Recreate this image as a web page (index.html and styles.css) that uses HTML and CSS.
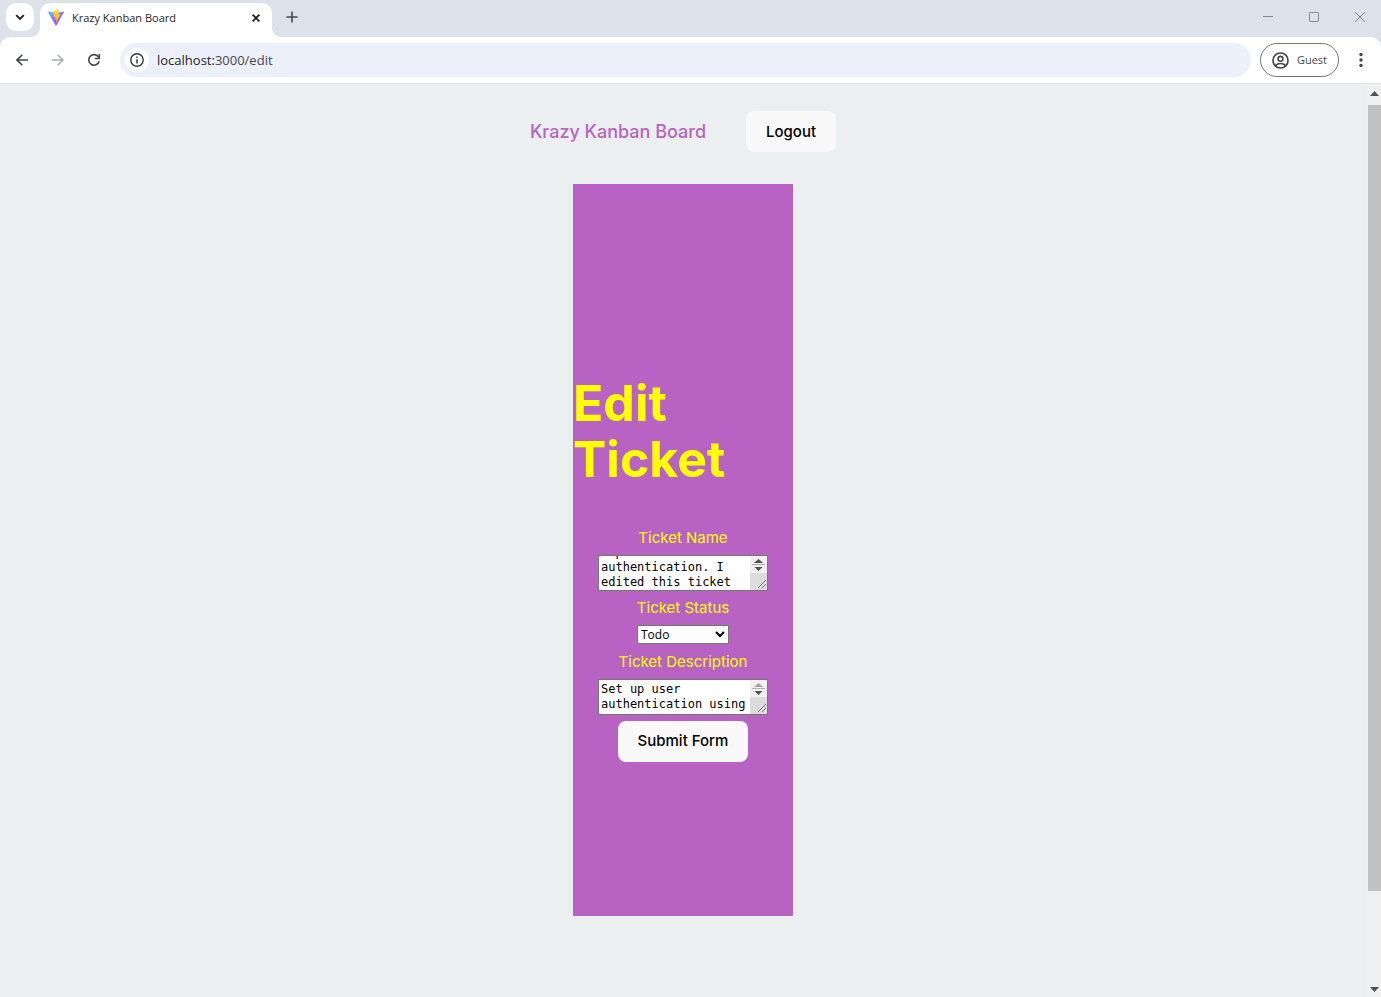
FILE: index.html
```html
<!DOCTYPE html>
<html lang="en">
<head>
<meta charset="utf-8">
<title>Krazy Kanban Board</title>
<link rel="stylesheet" href="styles.css">
</head>
<body>
<div class="browser">
  <header class="tabstrip">
    <button class="tab-search" aria-label="Search tabs"><svg width="10" height="7" viewBox="0 0 10 7"><path d="M1.200 1.200 5 5l3.800-3.800" fill="none" stroke="#1f1f1f" stroke-width="1.900"/></svg></button>
    <div class="tab">
      <svg class="favicon" width="16" height="16" viewBox="0 0 16 16">
        <defs>
          <linearGradient id="v" x1="0" y1="0" x2=".7" y2="1"><stop offset="0" stop-color="#41d1ff"/><stop offset=".35" stop-color="#7a8cff"/><stop offset="1" stop-color="#bd34fe"/></linearGradient>
          <linearGradient id="b" x1="0" y1="0" x2="0" y2="1"><stop offset="0" stop-color="#ffdd35"/><stop offset="1" stop-color="#ffa800"/></linearGradient>
        </defs>
        <path d="M15.900 2.300 8.400 15.600a.5.5 0 0 1-.8 0L.1 2.300a.5.5 0 0 1 .5-.7L8 2.900l7.400-1.300a.5.5 0 0 1 .5.7z" fill="url(#v)"/>
        <path d="M11.400.1 6 1.100a.2.2 0 0 0-.2.200l-.4 5.600c0 .2.100.3.300.2l1.500-.3c.2 0 .3.1.2.300L7 9.200c0 .2.100.3.300.2l.9-.3c.2 0 .3.100.3.300l-.8 3.400c0 .2.200.3.300.1l4.300-8.500c.1-.2 0-.3-.2-.3l-1.600.3c-.2 0-.3-.1-.2-.3l1.300-3.700c0-.2-.1-.3-.2-.3z" fill="url(#b)"/>
      </svg>
      <span class="tab-title">Krazy Kanban Board</span>
      <button class="bare" aria-label="Close tab"><svg width="8" height="8" viewBox="0 0 8 8"><path d="M.6.6l6.800 6.800M7.400.6.6 7.400" stroke="#1f1f1f" stroke-width="1.700"/></svg></button>
    </div>
    <button class="bare new-tab" aria-label="New tab"><svg width="12" height="12" viewBox="0 0 12 12"><path d="M6 .5v11M.5 6h11" stroke="#444746" stroke-width="1.600"/></svg></button>
    <div class="window-controls">
      <button class="bare" aria-label="Minimize"><svg width="10" height="10" viewBox="0 0 10 10"><path d="M0 4.500h10" stroke="#85888d"/></svg></button>
      <button class="bare" aria-label="Maximize"><svg width="10" height="10" viewBox="0 0 10 10"><rect x=".5" y=".5" width="9" height="9" rx=".6" fill="none" stroke="#85888d"/></svg></button>
      <button class="bare" aria-label="Close"><svg width="10" height="10" viewBox="0 0 10 10"><path d="M0 0l10 10M10 0 0 10" stroke="#85888d"/></svg></button>
    </div>
  </header>
  <div class="toolbar">
    <button class="bare" aria-label="Back"><svg width="12" height="12" viewBox="0 0 12 12"><path d="M12 6H1.200M6.300.700 1 6l5.300 5.300" fill="none" stroke="#444746" stroke-width="1.600"/></svg></button>
    <button class="bare" aria-label="Forward"><svg width="12" height="12" viewBox="0 0 12 12"><path d="M0 6h10.800M5.700.7 11 6l-5.300 5.300" fill="none" stroke="#a9abab" stroke-width="1.500"/></svg></button>
    <button class="bare" aria-label="Reload"><svg width="14" height="14" viewBox="0 0 14 14"><path d="M11.700 4.300A5.300 5.300 0 1 0 12.200 8.300" fill="none" stroke="#444746" stroke-width="1.600"/><path d="M12.300 1v4.500H7.800" fill="none" stroke="#444746" stroke-width="1.600"/></svg></button>
    <div class="omnibox">
      <button class="site-info" aria-label="View site information"><svg width="14" height="14" viewBox="0 0 14 14"><circle cx="7" cy="7" r="6.200" fill="none" stroke="#333638" stroke-width="1.400"/><path d="M7 6.200v4.200M7 3.500v1.500" stroke="#333638" stroke-width="1.500"/></svg></button>
      <span class="url"><b>localhost:</b>3000/edit</span>
    </div>
    <button class="profile"><svg width="17" height="17" viewBox="0 0 17 17"><circle cx="8.500" cy="8.500" r="7.500" fill="none" stroke="#444746" stroke-width="1.700"/><circle cx="8.500" cy="6.800" r="2.400" fill="none" stroke="#444746" stroke-width="1.600"/><path d="M3.300 13.600c2.800-2.800 7.600-2.800 10.400 0" fill="none" stroke="#444746" stroke-width="1.700"/></svg>Guest</button>
    <button class="bare menu" aria-label="Menu"><svg width="4" height="16" viewBox="0 0 4 16"><g fill="#444746"><circle cx="2" cy="2.500" r="1.700"/><circle cx="2" cy="8" r="1.700"/><circle cx="2" cy="13.500" r="1.700"/></g></svg></button>
  </div>
  <div class="viewport">
    <div class="page">
      <nav class="nav">
        <a class="brand" href="#">Krazy Kanban Board</a>
        <button class="btn">Logout</button>
      </nav>
      <main class="card">
        <h1>Edit Ticket</h1>
        <form class="form">
          <label for="name">Ticket Name</label>
          <div class="area">
            <textarea id="name" class="text" data-scroll="13">Implement user authentication. I edited this ticket</textarea>
            <div class="area-bar"><svg width="17" height="34" viewBox="0 0 17 34"><path fill="#f0f0f0" d="M0 0h17v17H0z"/><path fill="#dcdcdc" d="M0 17h17v17H0z"/><path d="M4 7l4.500-4L13 7zM4.500 11h8l-4 4z" fill="#505050"/><path d="M2 8.500h13" stroke="#b0b0b0"/><path d="M8 32l8-8M12 32l4-4" stroke="#777"/></svg></div>
          </div>
          <label for="status">Ticket Status</label>
          <div class="select-wrap">
            <select id="status"><option>Todo</option><option>In Progress</option><option>Done</option></select>
            <svg class="chevron" width="10" height="7" viewBox="0 0 10 7"><path d="M1 1l4 4 4-4" fill="none" stroke="#000" stroke-width="2"/></svg>
          </div>
          <label for="description">Ticket Description</label>
          <div class="area">
            <textarea id="description" class="text" data-scroll="0">Set up user authentication using</textarea>
            <div class="area-bar"><svg width="17" height="34" viewBox="0 0 17 34"><path fill="#f0f0f0" d="M0 0h17v17H0z"/><path fill="#dcdcdc" d="M0 17h17v17H0z"/><path d="M4 7l4.500-4L13 7z" fill="#a3a3a3"/><path d="M4.500 11h8l-4 4z" fill="#505050"/><path d="M2 8.500h13" stroke="#b0b0b0"/><path d="M8 32l8-8M12 32l4-4" stroke="#777"/></svg></div>
          </div>
          <button class="btn submit" type="submit">Submit Form</button>
        </form>
      </main>
    </div>
    <div class="scrollbar">
      <svg width="9" height="5" viewBox="0 0 9 5"><path d="M0 5 4.500 0 9 5z" fill="#505050"/></svg>
      <div class="track"><div class="thumb"></div></div>
      <svg width="9" height="5" viewBox="0 0 9 5"><path d="M0 0h9L4.500 5z" fill="#505050"/></svg>
    </div>
  </div>
</div>
<script src="script.js"></script>
</body>
</html>
```
FILE: styles.css
```css
* { box-sizing: border-box; }
body { margin: 0; font-family: "Open Sans", "Noto Sans", sans-serif; }
svg { display: block; flex: none; }
.browser { display: flex; flex-direction: column; height: 100vh; background: #dde1ea; }
.bare { display: flex; align-items: center; justify-content: center; padding: 0; border: 0; background: none; }

.tabstrip { display: flex; align-items: flex-start; height: 37px; flex: none; padding-left: 6px; }
.tab-search { display: flex; align-items: center; justify-content: center; width: 28px; height: 28px; margin: 3px 6px 0 0; padding: 0; border: 0; border-radius: 10px; background: #fff; }
.tab { position: relative; display: flex; align-items: center; gap: 8px; width: 232px; height: 34px; margin-top: 3px; padding: 0 12px 5px 8px; border-radius: 10px 10px 0 0; background: #fff; }
.tab::before, .tab::after { content: ""; position: absolute; bottom: 0; width: 10px; height: 10px; }
.tab::before { right: 100%; background: radial-gradient(circle at 0 0, transparent 10px, #fff 10px); }
.tab::after { left: 100%; background: radial-gradient(circle at 100% 0, transparent 10px, #fff 10px); }
.tab-title { flex: 1; font-size: 11px; line-height: 16px; color: #1f1f1f; white-space: nowrap; }
.new-tab { width: 28px; height: 28px; margin: 3px 0 0 6px; }
.window-controls { display: flex; margin-left: auto; }
.window-controls .bare { width: 46px; height: 34px; }
.window-controls .bare:last-child { margin-right: -2px; }

.toolbar { display: flex; align-items: center; flex: none; height: 47px; padding: 0 10px 0 4px; background: #fff; border-bottom: 1px solid #dfe1e4; border-radius: 10px 10px 0 0; }
.toolbar > .bare { width: 36px; height: 34px; flex: none; }
.omnibox { display: flex; align-items: center; flex: 1; gap: 8px; height: 34px; margin-left: 8px; padding: 0 5px; border-radius: 17px; background: #ebf0fa; }
.site-info { display: flex; align-items: center; justify-content: center; width: 24px; height: 24px; padding: 0; border: 0; border-radius: 50%; background: #fff; }
.url { font-size: 13px; line-height: 20px; color: #474747; }
.url b { font-weight: 400; color: #1f1f1f; }
.profile { display: flex; align-items: center; gap: 8px; height: 34px; margin-left: 9px; padding: 0 11px; border: 1px solid #747775; border-radius: 17px; background: #fff; font: 11px/16px "Open Sans", "Noto Sans", sans-serif; color: #444746; }
.toolbar > .menu { width: 20px; margin-left: 12px; }

.viewport { display: flex; flex: 1; min-height: 0; background: #ebeff0; }
.page { display: flex; flex: 1; flex-direction: column; align-items: center; padding: 27px 0 81px; font-family: Inter, sans-serif; font-size: 15px; line-height: 24px; }
.nav { display: flex; align-items: center; gap: 40px; margin-bottom: 32px; }
.brand { font-size: 18px; font-weight: 500; color: #b863c4; text-decoration: none; }
.btn { height: 41px; padding: 0 20px; border: 0; border-radius: 8px; background: #f9f9f9; color: #000; font: 500 15px/24px Inter, sans-serif; }
.card { display: flex; flex: 1; flex-direction: column; justify-content: center; width: 220px; background: #b863c4; color: #ff0; }
h1 { margin: 36px 0 39px; font-size: 50px; font-weight: 700; line-height: 56px; }
.form { display: flex; flex-direction: column; align-items: center; gap: 5px; }
.area { display: flex; width: 170px; height: 36px; border: 1px solid #767676; background: #fff; }
.text { flex: 1; min-width: 0; height: 34px; padding: 2px 0 2px 2px; border: 0; resize: none; overflow: hidden; background: #fff; color: #000; font: 12px/15px "DejaVu Sans Mono", monospace; }
.area-bar { width: 17px; }
.select-wrap { position: relative; margin-bottom: 1px; }
select { display: block; appearance: none; width: 92px; height: 19px; padding: 0 3px; border: 1px solid #767676; border-radius: 0; background: #fff; color: #000; font: 12px/17px "Open Sans", "Noto Sans", sans-serif; }
.chevron { position: absolute; top: 6px; right: 4px; pointer-events: none; }
.submit { margin-top: 1px; }

.scrollbar { display: flex; flex-direction: column; align-items: center; justify-content: space-between; width: 15px; padding: 7px 0 5px 2px; background: #f0f0f0; }
.track { flex: 1; width: 100%; margin: 9px 0; }
.thumb { height: 90%; background: #c1c1c1; }
```
FILE: script.js
```js
document.querySelectorAll("textarea[data-scroll]").forEach(function (area) {
  area.scrollTop = Number(area.dataset.scroll);
});
```
